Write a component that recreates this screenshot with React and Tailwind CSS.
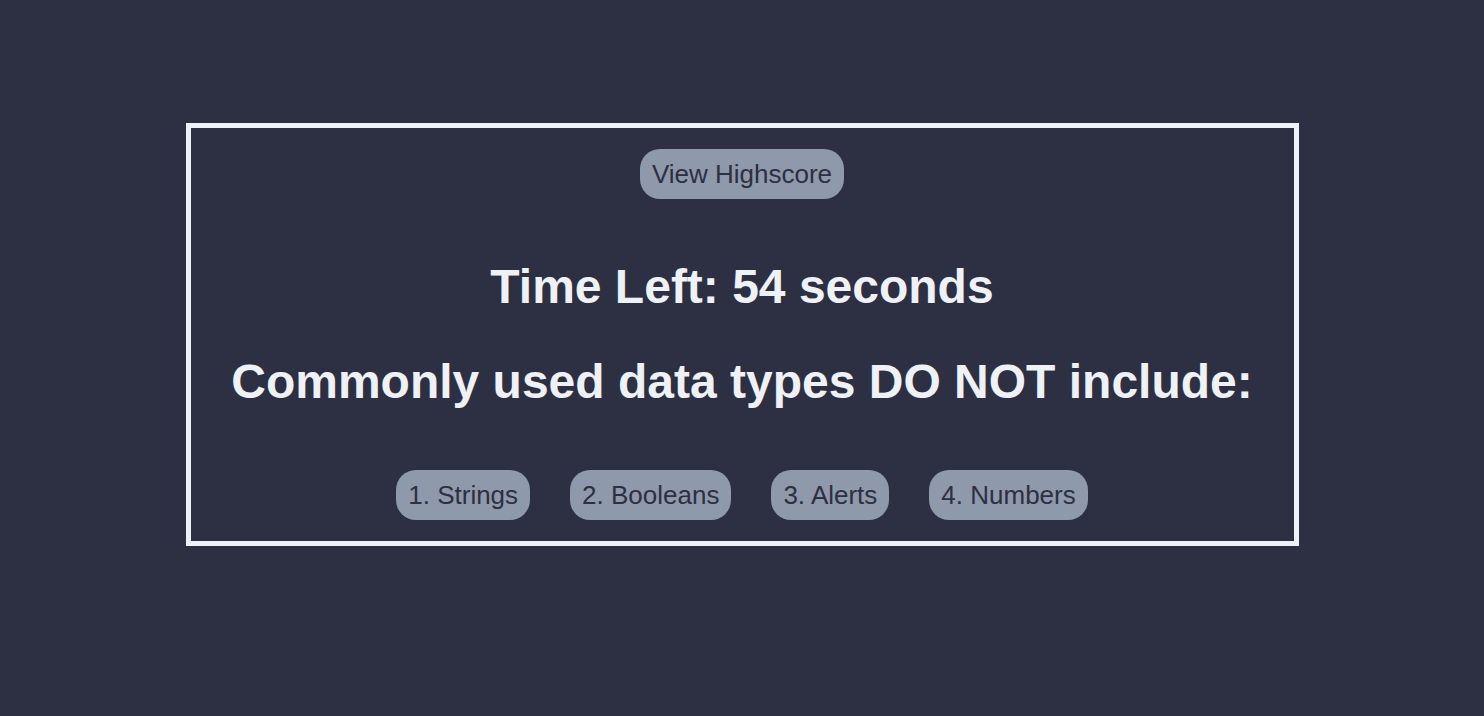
const answers = ['1. Strings', '2. Booleans', '3. Alerts', '4. Numbers'];

const App = () => {
    return (
        <div
            className="min-h-[716px] w-full bg-[#2d2f42] pt-[123px]"
            style={{ fontFamily: '"Liberation Sans", Arial, sans-serif' }}
        >
            <div className="mx-auto flex w-3/4 flex-col items-center border-[5px] border-[#eef1f5] pt-[21px] pb-[21px]">
                {/* Highscore */}
                <button className="rounded-[20px] bg-[#8e99ac] px-3 py-[10px] text-[26px] leading-[30px] text-[#2d2f42]">
                    View Highscore
                </button>

                {/* Timer */}
                <h2 className="mt-[60px] text-[48px] leading-[55px] font-bold text-[#eef1f5]">
                    Time Left: 54 seconds
                </h2>

                {/* Question */}
                <h2 className="mt-[40px] text-[48px] leading-[55px] font-bold text-[#eef1f5]">
                    Commonly used data types DO NOT include:
                </h2>

                {/* Answers */}
                <div className="mt-[61px] flex justify-center gap-10">
                    {answers.map((a) => (
                        <button
                            key={a}
                            className="rounded-[20px] bg-[#8e99ac] px-3 py-[10px] text-[26px] leading-[30px] text-[#2d2f42]"
                        >
                            {a}
                        </button>
                    ))}
                </div>
            </div>
        </div>
    );
};

export default App;
